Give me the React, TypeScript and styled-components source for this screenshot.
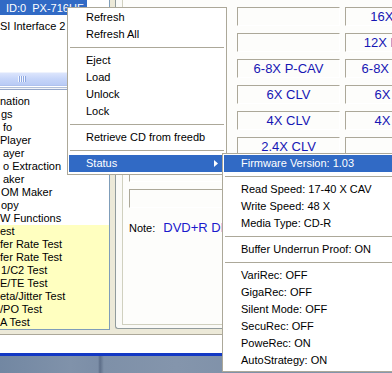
import React from 'react';
import styled, { createGlobalStyle } from 'styled-components';

const UI = `"Liberation Sans", Arial, sans-serif`;

const GlobalStyle = createGlobalStyle`
  * { box-sizing: border-box; }
  html, body { margin: 0; padding: 0; width: 392px; height: 373px; overflow: hidden; background: #ECE9D8; }
  #root { width: 392px; height: 373px; }
`;

const Screen = styled.div`
  position: relative;
  width: 392px;
  height: 373px;
  overflow: hidden;
  display: flex;
  flex-direction: column;
  font-family: ${UI};
  font-size: 11px;
  color: #000;
  background: #ECE9D8;
`;

const MainArea = styled.div`
  display: flex;
  height: 330px;
  flex: none;
`;

const LeftPane = styled.div`
  width: 110px;
  flex: none;
  display: flex;
  flex-direction: column;
  background: #fff;
  border-right: 1px solid #7F9DB9;
`;

const Tree = styled.div`
  height: 72px;
  flex: none;
  overflow: hidden;
  background: #fff;
`;

const TreeRow = styled.div<{ $h: number }>`
  height: ${p => p.$h}px;
  line-height: ${p => p.$h}px;
  white-space: nowrap;
`;

const Selected = styled.span`
  display: inline-block;
  height: 15px;
  line-height: 16px;
  padding: 0 3px 0 6px;
  background: #316AC5;
  color: #fff;
  vertical-align: top;
`;

const HScroll = styled.div`
  height: 14px;
  flex: none;
  display: flex;
  align-items: center;
  padding-left: 18px;
  background: linear-gradient(#DCE5FC, #C6D5F9 50%, #B9CBF5);
  border-top: 1px solid #EEF2FD;
  border-bottom: 1px solid #AFC2EE;
`;

const Grip = styled.div`
  width: 8px;
  height: 6px;
  background: repeating-linear-gradient(90deg, #F4F7FE 0 1px, #8EA8E2 1px 2px);
`;

const PaneDivider = styled.div`
  height: 5px;
  flex: none;
  background: linear-gradient(#FFFFFF 0 1px, #B3C0D9 1px 2px, #F2F4F9 2px 3px, #93A6C9 3px 4px, #FFFFFF 4px);
`;

const List = styled.div`
  flex: 1;
  padding-top: 4px;
  border-bottom: 1px solid #7F9DB9;
  background: #fff;
  overflow: hidden;
`;

const ListRow = styled.div<{ $test?: boolean; $indent: number }>`
  height: 13px;
  line-height: 13px;
  padding-left: ${p => p.$indent}px;
  white-space: nowrap;
  overflow: hidden;
  background: ${p => (p.$test ? '#FFFFC0' : 'transparent')};
`;

const ContentArea = styled.div`
  flex: 1;
  display: flex;
  padding: 0 0 1px 5px;
  background: #ECE9D8;
  min-width: 0;
`;

const Panel = styled.div`
  flex: 1;
  display: flex;
  flex-direction: column;
  padding: 0 0 3px 6px;
  background: #FAFAF7;
  border-left: 1px solid #919B9C;
  border-bottom: 1px solid #919B9C;
  border-bottom-left-radius: 3px;
  min-width: 0;
`;

const Frame = styled.div`
  flex: 1;
  padding: 7px 0 0 6px;
  background: #FDFDFB;
  border-left: 1px solid #D0D0BF;
  border-bottom: 1px solid #D0D0BF;
`;

const ValueGrid = styled.div`
  display: grid;
  grid-template-columns: repeat(3, 103px);
  grid-auto-rows: 19px;
  column-gap: 5px;
  row-gap: 7px;
  width: 319px;
`;

const ValueBox = styled.div<{ $wide?: boolean }>`
  grid-column: ${p => (p.$wide ? '1 / -1' : 'auto')};
  border-top: 1px solid #ACA899;
  border-left: 1px solid #ACA899;
  border-right: 1px solid #FFFFFF;
  border-bottom: 1px solid #FFFFFF;
  background: #FDFDFB;
  color: #1616B4;
  font-size: 13px;
  line-height: 17px;
  text-align: center;
  white-space: nowrap;
  overflow: hidden;
`;

const LabelCell = styled.div``;

const NoteRow = styled.div`
  display: flex;
  align-items: baseline;
  gap: 8px;
  margin-top: 12px;
  line-height: 16px;
  white-space: nowrap;
`;

const NoteLabel = styled.span`
  font-size: 11px;
  color: #000;
`;

const NoteValue = styled.span`
  font-size: 13px;
  color: #1A1ACC;
`;

const StatusGap = styled.div`
  height: 4px;
  flex: none;
  background: #ECE9D8;
`;

const StatusBar = styled.div`
  height: 19px;
  flex: none;
  background: #fff;
  border-top: 1px solid #ACA899;
`;

const TitleEdge = styled.div`
  height: 3px;
  flex: none;
  background: #1238C4;
`;

const Desktop = styled.div`
  flex: 1;
  background: linear-gradient(90deg, #7287A2 0%, #8092AA 18%, #7C8EA7 25%, #5D6E88 25.5%, #7E90A8 26.5%, #8495AC 45%, #7D8FA7 70%, #8898AE 100%);
`;

const Menu = styled.div<{ $x: number; $y: number; $w: number }>`
  position: absolute;
  left: ${p => p.$x}px;
  top: ${p => p.$y}px;
  width: ${p => p.$w}px;
  padding: 1px 1px 2px;
  background: #fff;
  border: 1px solid #ACA899;
  font-family: ${UI};
  font-size: 11px;
  color: #000;
`;

const MenuItem = styled.div<{ $active?: boolean }>`
  position: relative;
  height: 17px;
  line-height: 17px;
  padding-left: 17px;
  white-space: nowrap;
  background: ${p => (p.$active ? '#316AC5' : 'transparent')};
  color: ${p => (p.$active ? '#fff' : '#000')};
`;

const MenuSeparator = styled.div`
  height: 9px;
  display: flex;
  align-items: center;
  padding: 0 1px;
  &::before {
    content: '';
    flex: 1;
    height: 1px;
    background: #ACA899;
  }
`;

const SubArrow = styled.svg`
  position: absolute;
  right: 7px;
  top: 5px;
`;

const listItems: { text: string; test?: boolean; indent: number }[] = [
  { text: 'nation', indent: 0 },
  { text: 'gs', indent: 1 },
  { text: 'fo', indent: 3 },
  { text: 'Player', indent: 0 },
  { text: 'ayer', indent: 3 },
  { text: 'o Extraction', indent: 3 },
  { text: 'aker', indent: 3 },
  { text: 'OM Maker', indent: 1 },
  { text: 'opy', indent: 1 },
  { text: 'W Functions', indent: 0 },
  { text: 'est', test: true, indent: 0 },
  { text: 'fer Rate Test', test: true, indent: 0 },
  { text: 'fer Rate Test', test: true, indent: 0 },
  { text: '1/C2 Test', test: true, indent: 1 },
  { text: 'E/TE Test', test: true, indent: 0 },
  { text: 'eta/Jitter Test', test: true, indent: 0 },
  { text: '/PO Test', test: true, indent: 0 },
  { text: 'A Test', test: true, indent: 0 },
];

const speedRows: [string, string][] = [
  ['', '16X CAV'],
  ['', '12X P-CAV'],
  ['6-8X P-CAV', '6-8X P-CAV'],
  ['6X CLV', '6X CLV'],
  ['4X CLV', '4X CLV'],
  ['2.4X CLV', ''],
];

type Entry = { label?: string; sep?: boolean; active?: boolean; sub?: boolean };

const mainMenu: Entry[] = [
  { label: 'Refresh' },
  { label: 'Refresh All' },
  { sep: true },
  { label: 'Eject' },
  { label: 'Load' },
  { label: 'Unlock' },
  { label: 'Lock' },
  { sep: true },
  { label: 'Retrieve CD from freedb' },
  { sep: true },
  { label: 'Status', active: true, sub: true },
];

const statusMenu: Entry[] = [
  { label: 'Firmware Version: 1.03', active: true },
  { sep: true },
  { label: 'Read Speed: 17-40 X CAV' },
  { label: 'Write Speed: 48 X' },
  { label: 'Media Type: CD-R' },
  { sep: true },
  { label: 'Buffer Underrun Proof: ON' },
  { sep: true },
  { label: 'VariRec: OFF' },
  { label: 'GigaRec: OFF' },
  { label: 'Silent Mode: OFF' },
  { label: 'SecuRec: OFF' },
  { label: 'PoweRec: ON' },
  { label: 'AutoStrategy: ON' },
];

function MenuEntries({ items }: { items: Entry[] }) {
  return (
    <>
      {items.map((it, i) =>
        it.sep ? (
          <MenuSeparator key={i} />
        ) : (
          <MenuItem key={i} $active={it.active}>
            {it.label}
            {it.sub && (
              <SubArrow width="4" height="7" viewBox="0 0 4 7">
                <path d="M0 0 L4 3.5 L0 7 Z" fill="currentColor" />
              </SubArrow>
            )}
          </MenuItem>
        )
      )}
    </>
  );
}

export default function App() {
  return (
    <>
      <GlobalStyle />
      <Screen>
        <MainArea>
          <LeftPane>
            <Tree>
              <TreeRow $h={16}>
                <Selected>ID:0&nbsp;&nbsp;PX-716UF</Selected>
              </TreeRow>
              <TreeRow $h={21}>SI Interface 2</TreeRow>
            </Tree>
            <HScroll>
              <Grip />
            </HScroll>
            <PaneDivider />
            <List>
              {listItems.map((it, i) => (
                <ListRow key={i} $test={it.test} $indent={it.indent}>
                  {it.text}
                </ListRow>
              ))}
            </List>
          </LeftPane>
          <ContentArea>
            <Panel>
              <Frame>
                <ValueGrid>
                  {speedRows.map(([a, b], i) => (
                    <React.Fragment key={i}>
                      <LabelCell />
                      <ValueBox>{a}</ValueBox>
                      <ValueBox>{b}</ValueBox>
                    </React.Fragment>
                  ))}
                  <ValueBox $wide />
                  <ValueBox $wide />
                </ValueGrid>
                <NoteRow>
                  <NoteLabel>Note:</NoteLabel>
                  <NoteValue>DVD+R DL</NoteValue>
                </NoteRow>
              </Frame>
            </Panel>
          </ContentArea>
        </MainArea>
        <StatusGap />
        <StatusBar />
        <TitleEdge />
        <Desktop />

        <Menu $x={67} $y={7} $w={160}>
          <MenuEntries items={mainMenu} />
        </Menu>
        <Menu $x={222} $y={153} $w={180}>
          <MenuEntries items={statusMenu} />
        </Menu>
      </Screen>
    </>
  );
}
